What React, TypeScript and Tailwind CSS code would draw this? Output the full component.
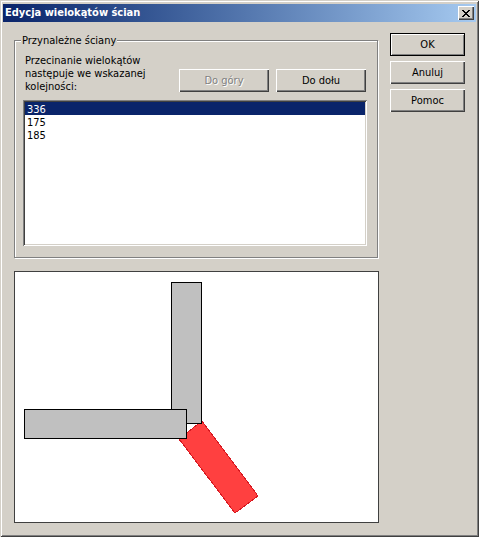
/**
 * Dialog "Edycja wielokątów ścian" - classic Windows style
 */

const raised =
  'shadow-[inset_1px_1px_0_#ffffff,inset_-1px_-1px_0_#404040,inset_-2px_-2px_0_#808080]';

function Button({ label, disabled, isDefault, className = '' }: { label: string; disabled?: boolean; isDefault?: boolean; className?: string }) {
  return (
    <div
      className={`h-[23px] flex items-center justify-center bg-[#d4d0c8] ${
        isDefault
          ? 'border border-black shadow-[inset_1px_1px_0_#ffffff,inset_-1px_-1px_0_#808080]'
          : raised
      } ${disabled ? 'text-[#808080] [text-shadow:1px_1px_0_#ffffff]' : 'text-black'} ${className}`}
    >
      {label}
    </div>
  );
}

export default function App() {
  const rows = ['336', '175', '185'];

  return (
    <div className="w-[479px] h-[537px] p-[3px] bg-[#d4d0c8] overflow-hidden flex flex-col text-[11px] leading-[13px] text-black font-['DejaVu_Sans',sans-serif] [font-stretch:condensed] shadow-[inset_1px_1px_0_#d4d0c8,inset_-1px_-1px_0_#404040,inset_2px_2px_0_#ffffff,inset_-2px_-2px_0_#808080]">
      {/* Title bar */}
      <div className="h-[18px] mt-[1px] pl-[2px] pr-[2px] flex items-center justify-between bg-gradient-to-r from-[#0a246a] to-[#a6caf0]">
        <span className="text-white font-bold mb-[2px]">Edycja wielokątów ścian</span>
        <div className="w-[16px] h-[14px] flex items-center justify-center bg-[#d4d0c8] shadow-[inset_1px_1px_0_#ffffff,inset_-1px_-1px_0_#404040,inset_-2px_-2px_0_#808080]">
          <svg viewBox="0 0 8 7" width="8" height="7" shapeRendering="crispEdges">
            <path d="M0 0h2v1h-2zM6 0h2v1h-2zM1 1h2v1h-2zM5 1h2v1h-2zM2 2h4v1h-4zM3 3h2v1h-2zM2 4h4v1h-4zM1 5h2v1h-2zM5 5h2v1h-2zM0 6h2v1h-2zM6 6h2v1h-2z" fill="#000000" />
          </svg>
        </div>
      </div>

      <div className="flex pl-[11px] gap-[11px]">
        <div className="w-[365px] pt-[18px] flex flex-col">
          {/* Group box */}
          <div className="relative w-[364px] h-[218px] pt-[12px] pl-[8px] border border-[#808080] shadow-[inset_1px_1px_0_#ffffff,1px_1px_0_#ffffff]">
            <span className="absolute left-[6px] top-[-7px] px-[1px] bg-[#d4d0c8]">Przynależne ściany</span>
            <div className="flex h-[39px] w-[344px] items-end">
              <p className="w-[156px] pl-[2px] self-start mt-[1px]">
                Przecinanie wielokątów następuje we wskazanej kolejności:
              </p>
              <Button label="Do góry" disabled className="w-[90px] mr-[7px]" />
              <Button label="Do dołu" className="w-[90px]" />
            </div>
            {/* List */}
            <div className="w-[344px] h-[146px] mt-[8px] p-[2px] bg-white shadow-[inset_1px_1px_0_#808080,inset_-1px_-1px_0_#ffffff,inset_2px_2px_0_#404040,inset_-2px_-2px_0_#d4d0c8]">
              {rows.map((row, i) => (
                <div key={row} className={`h-[13px] pl-[2px] leading-[15px] ${i === 0 ? 'bg-[#0a246a] text-white' : ''}`}>
                  {row}
                </div>
              ))}
            </div>
          </div>

          {/* Preview */}
          <div className="w-[365px] h-[252px] mt-[13px] bg-white border border-[#404040]">
            <svg viewBox="15 272 363 250" width="363" height="250" className="block">
              <polygon points="202,421 258,496 235,513 179,439" fill="#ff4040" stroke="#d81820" strokeWidth="1" shapeRendering="crispEdges" />
              <rect x="171.5" y="282.5" width="30" height="141" fill="#c0c0c0" stroke="#000000" shapeRendering="crispEdges" />
              <rect x="24.5" y="409.5" width="162" height="29" fill="#c0c0c0" stroke="#000000" shapeRendering="crispEdges" />
            </svg>
          </div>
        </div>

        {/* Right buttons */}
        <div className="w-[75px] pt-[11px] flex flex-col gap-[5px]">
          <Button label="OK" isDefault />
          <Button label="Anuluj" />
          <Button label="Pomoc" />
        </div>
      </div>
    </div>
  );
}
